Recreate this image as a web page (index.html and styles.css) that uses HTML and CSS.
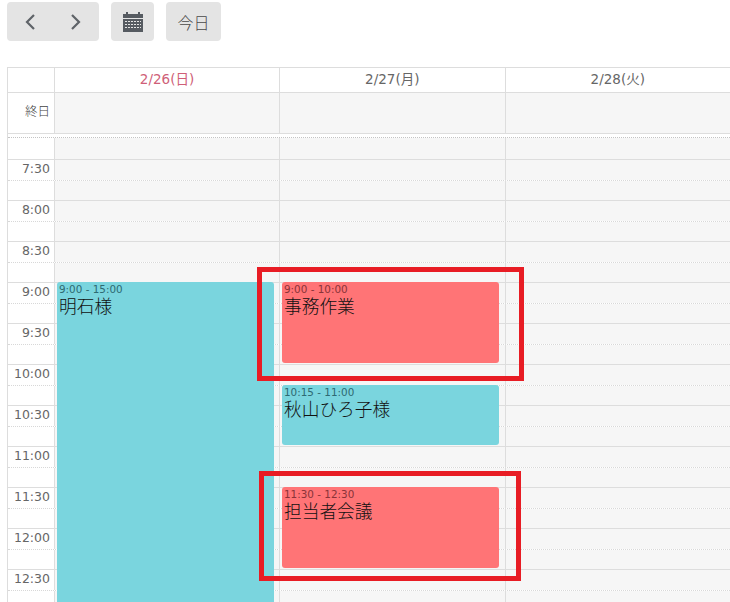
FILE: index.html
```html
<!DOCTYPE html>
<html lang="ja">
<head>
<meta charset="utf-8">
<title>予定表</title>
<link rel="stylesheet" href="styles.css">
</head>
<body>
<div class="toolbar">
  <div class="btn btn-nav">
    <svg width="12" height="18" viewBox="0 0 12 18"><path d="M10 2 3 9l7 7" fill="none" stroke="#5f6368" stroke-width="2.2"/></svg>
    <svg width="12" height="18" viewBox="0 0 12 18"><path d="M2 2l7 7-7 7" fill="none" stroke="#5f6368" stroke-width="2.2"/></svg>
  </div>
  <div class="btn btn-cal">
    <svg width="20" height="21" viewBox="0 0 20 21">
      <path fill="#565b61" d="M0 3h3V1h2v2h10V1h2v2h3v4H0zM0 8h20v13H0z"/>
      <path stroke="#e4e4e4" stroke-width="1" stroke-dasharray="2 1" fill="none" d="M2 10.5h16M2 13.5h16M2 16.5h16"/>
    </svg>
  </div>
  <div class="btn btn-today">今日</div>
</div>

<div class="calendar">
  <div class="head-row">
    <div class="axis"></div>
    <div class="day day-first sunday">2/26(日)</div>
    <div class="day">2/27(月)</div>
    <div class="day">2/28(火)</div>
  </div>
  <div class="allday-row">
    <div class="axis allday-label">終日</div>
    <div class="allday-cell day-first"></div>
    <div class="allday-cell"></div>
    <div class="allday-cell"></div>
  </div>
  <div class="body">
    <div class="slot slot-first"><div class="axis"></div><div class="lane"></div></div>
    <div class="slot"><div class="axis">7:30</div><div class="lane"></div></div>
    <div class="slot"><div class="axis"></div><div class="lane"></div></div>
    <div class="slot"><div class="axis">8:00</div><div class="lane"></div></div>
    <div class="slot"><div class="axis"></div><div class="lane"></div></div>
    <div class="slot"><div class="axis">8:30</div><div class="lane"></div></div>
    <div class="slot"><div class="axis"></div><div class="lane"></div></div>
    <div class="slot"><div class="axis">9:00</div><div class="lane"></div></div>
    <div class="slot"><div class="axis"></div><div class="lane"></div></div>
    <div class="slot"><div class="axis">9:30</div><div class="lane"></div></div>
    <div class="slot"><div class="axis"></div><div class="lane"></div></div>
    <div class="slot"><div class="axis">10:00</div><div class="lane"></div></div>
    <div class="slot"><div class="axis"></div><div class="lane"></div></div>
    <div class="slot"><div class="axis">10:30</div><div class="lane"></div></div>
    <div class="slot"><div class="axis"></div><div class="lane"></div></div>
    <div class="slot"><div class="axis">11:00</div><div class="lane"></div></div>
    <div class="slot"><div class="axis"></div><div class="lane"></div></div>
    <div class="slot"><div class="axis">11:30</div><div class="lane"></div></div>
    <div class="slot"><div class="axis"></div><div class="lane"></div></div>
    <div class="slot"><div class="axis">12:00</div><div class="lane"></div></div>
    <div class="slot"><div class="axis"></div><div class="lane"></div></div>
    <div class="slot"><div class="axis">12:30</div><div class="lane"></div></div>
    <div class="slot"><div class="axis"></div><div class="lane"></div></div>
    <div class="columns">
      <div class="column">
        <div class="event cyan ev-akashi"><div class="ev-time">9:00 - 15:00</div><div class="ev-title">明石様</div></div>
      </div>
      <div class="column col-wide">
        <div class="event red ev-jimu"><div class="ev-time">9:00 - 10:00</div><div class="ev-title">事務作業</div></div>
        <div class="event cyan ev-akiyama"><div class="ev-time">10:15 - 11:00</div><div class="ev-title">秋山ひろ子様</div></div>
        <div class="event red ev-tanto"><div class="ev-time">11:30 - 12:30</div><div class="ev-title">担当者会議</div></div>
      </div>
      <div class="column col-last"></div>
    </div>
  </div>
</div>

<div class="frame frame-one"></div>
<div class="frame frame-two"></div>
</body>
</html>
```

FILE: styles.css
```css
* { box-sizing: border-box; }
html, body { margin: 0; height: 602px; overflow: hidden; background: #fff; }
body {
  position: relative;
  padding: 2px 0 0 7px;
  font-family: "DejaVu Sans", "Noto Sans CJK JP", sans-serif;
  color: #555;
}

/* toolbar */
.toolbar { display: flex; gap: 12px; height: 39px; }
.btn {
  display: flex;
  align-items: center;
  justify-content: center;
  background: #e4e4e4;
  border-radius: 4px;
  height: 39px;
  font-size: 16px;
  font-family: "Noto Sans CJK JP", sans-serif;
  font-weight: 300;
  color: #4a4a4a;
}
.btn-nav { width: 92px; gap: 34px; }
.btn-cal { width: 43px; }
.btn-today { width: 55px; }

/* calendar */
.calendar { margin-top: 26px; border-top: 1px solid #ddd; border-left: 1px solid #ddd; }
.axis {
  flex: 0 0 47px;
  width: 47px;
  border-right: 1px solid #ddd;
  background: #fff;
  text-align: right;
  padding-right: 4px;
  font-size: 12.5px;
  color: #666;
}
.head-row { display: flex; height: 25px; border-bottom: 1px solid #ddd; }
.day {
  flex: 0 0 225.5px;
  text-align: center;
  font-size: 13.5px;
  line-height: 23px;
  border-right: 1px solid #ddd;
  color: #666;
}
.day.day-first, .allday-cell.day-first { flex-basis: 225px; }
.day.sunday { color: #cf5f78; }
.allday-row { display: flex; height: 41px; border-bottom: 1px solid #ddd; }
.allday-label {
  font-family: "Noto Sans CJK JP", sans-serif;
  font-weight: 300;
  line-height: 35px;
  color: #444;
}
.allday-cell { flex: 0 0 225.5px; background: #f6f6f6; border-right: 1px solid #ddd; }

.body { position: relative; margin-top: 3px; border-top: 1px dotted #c4c4c4; }
.slot { display: flex; height: 20.5px; border-bottom: 1px dotted #d8d8d8; }
.slot:nth-child(odd) { border-bottom-style: solid; border-bottom-color: #ddd; }
.slot-first { height: 22px; border-bottom: 1px solid #ddd; }
.slot .axis { line-height: 17px; overflow: visible; white-space: nowrap; }
.lane { flex: 1; background: #f6f6f6; }

/* event layer over the slot rows */
.columns {
  position: absolute;
  top: 0;
  left: 47px;
  right: 0;
  bottom: 0;
  display: flex;
}
.column { position: relative; flex: 0 0 225px; border-right: 1px solid #ddd; }
.col-wide { flex-basis: 226px; }
.col-last { flex: 1; border-right: 0; }

.event {
  position: absolute;
  border-radius: 3px;
  padding: 1px 2px 0;
  color: #111;
  overflow: hidden;
}
.ev-time { font-size: 10.4px; line-height: 12px; }
.ev-title {
  font-family: "Noto Sans CJK JP", sans-serif;
  font-weight: 300;
  font-size: 17.7px;
  line-height: 20px;
}
.cyan { background: #7ad5de; }
.cyan .ev-time { color: #2e6a72; }
.red { background: #ff7476; }
.red .ev-time { color: #8a3338; }

.ev-akashi { top: 144px; height: 340px; left: 2px; right: 5px; }
.ev-jimu { top: 144px; height: 81px; left: 2px; right: 6px; }
.ev-akiyama { top: 247px; height: 60px; left: 2px; right: 6px; }
.ev-tanto { top: 349px; height: 81px; left: 2px; right: 6px; }

/* red annotation frames drawn over the screenshot */
.frame { position: absolute; border: 5px solid #e81c24; }
.frame-one { left: 257px; top: 267px; width: 267px; height: 114px; }
.frame-two { left: 259px; top: 471px; width: 262px; height: 110px; }
```
